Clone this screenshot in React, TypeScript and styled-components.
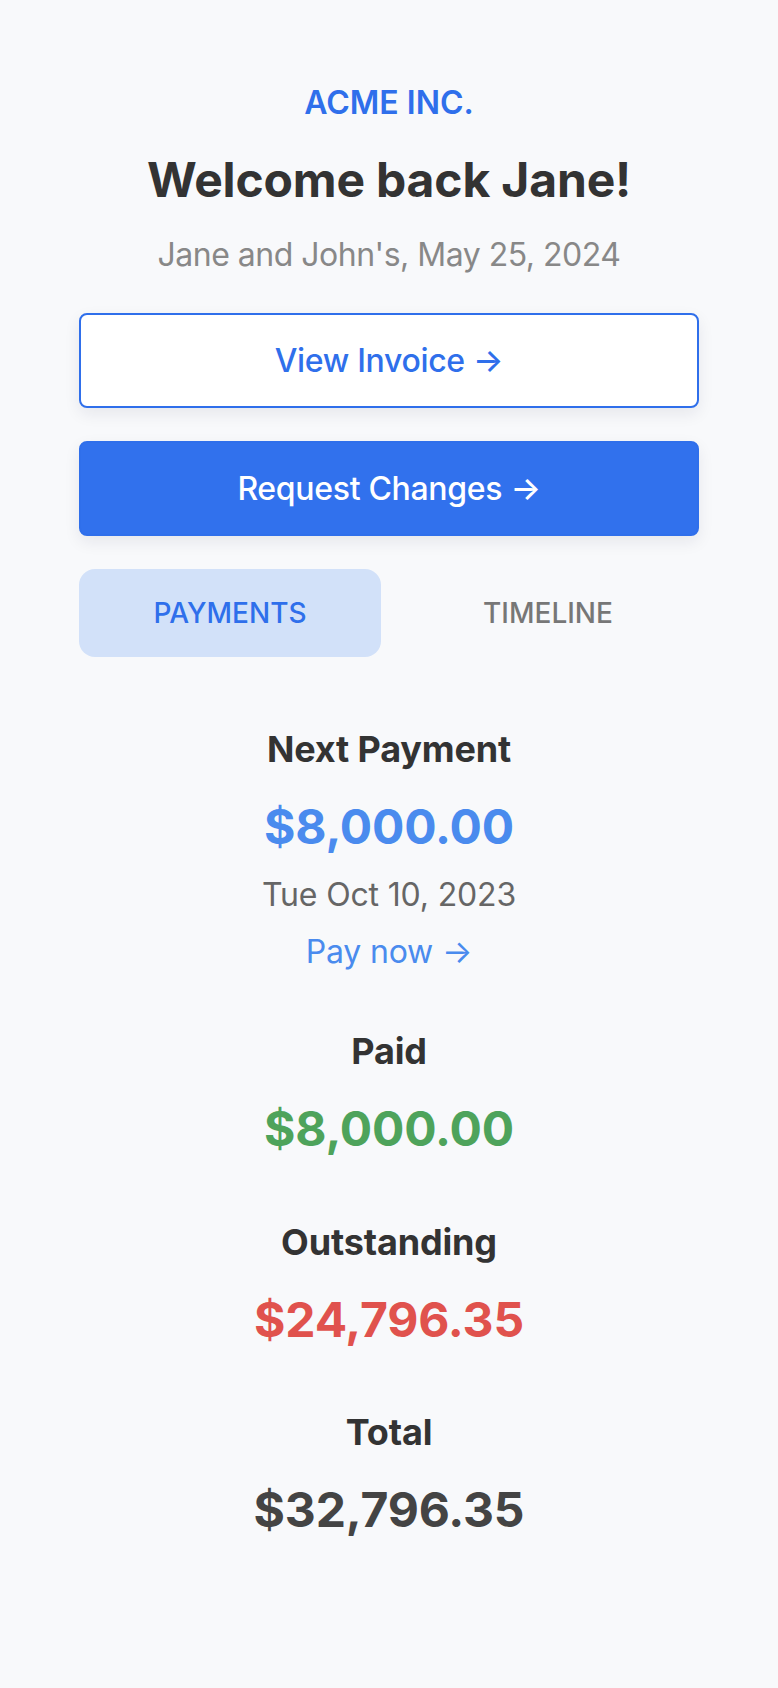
import React from "react";
import styled, { createGlobalStyle } from "styled-components";

const GlobalStyle = createGlobalStyle`
  html, body {
    margin: 0;
    padding: 0;
    background: #f8f9fb;
  }
  body {
    font-family: Inter, "Noto Sans", sans-serif;
    -webkit-font-smoothing: antialiased;
    letter-spacing: -0.01em;
  }
  * { box-sizing: border-box; }
`;

const Page = styled.main`
  min-height: 1688px;
  background: #f8f9fb;
  padding: 79px 0 80px;
`;

const Column = styled.div`
  width: 620px;
  margin: 0 auto;
  display: flex;
  flex-direction: column;
  align-items: stretch;
  text-align: center;
`;

const Brand = styled.div`
  font-size: 32px;
  line-height: 48px;
  font-weight: 600;
  letter-spacing: 0;
  color: #2f6feb;
`;

const Title = styled.h1`
  margin: 23px 0 0;
  font-size: 48px;
  line-height: 60px;
  font-weight: 700;
  color: #333333;
`;

const Subtitle = styled.p`
  margin: 21px 0 0;
  font-size: 32px;
  line-height: 48px;
  font-weight: 400;
  letter-spacing: -0.5px;
  color: #888888;
`;

const ActionButton = styled.button<{ $primary?: boolean }>`
  margin-top: ${(p) => (p.$primary ? "33px" : "34px")};
  height: 95px;
  width: 100%;
  border-radius: 8px;
  border: 2px solid #2f6feb;
  background: ${(p) => (p.$primary ? "#3171ed" : "#ffffff")};
  color: ${(p) => (p.$primary ? "#ffffff" : "#2f6feb")};
  font-family: Inter, sans-serif;
  font-size: 32px;
  font-weight: 500;
  letter-spacing: -0.01em;
  box-shadow: 0 6px 16px rgba(20, 30, 60, 0.08);
  cursor: pointer;
`;

const Tabs = styled.div`
  margin-top: 33px;
  display: grid;
  grid-template-columns: 1fr 1fr;
  gap: 16px;
`;

const Tab = styled.button<{ $active?: boolean }>`
  height: 88px;
  border: none;
  border-radius: 16px;
  background: ${(p) => (p.$active ? "#d2e1f9" : "transparent")};
  color: ${(p) => (p.$active ? "#2f6feb" : "#777777")};
  font-family: Inter, sans-serif;
  font-size: 28px;
  font-weight: 500;
  cursor: pointer;
`;

const Summary = styled.section`
  margin-top: 68px;
  display: flex;
  flex-direction: column;
  align-items: center;
`;

const Block = styled.div<{ $gap: number }>`
  display: flex;
  flex-direction: column;
  align-items: center;
  margin-top: ${(p) => p.$gap}px;
`;

const Label = styled.h2`
  margin: 0;
  font-size: 36px;
  line-height: 48px;
  font-weight: 700;
  color: #333333;
`;

const Amount = styled.div<{ $color: string }>`
  margin-top: 22px;
  font-size: 48px;
  line-height: 64px;
  font-weight: 700;
  color: ${(p) => p.$color};
`;

const DateText = styled.div`
  margin-top: 12px;
  font-size: 32px;
  line-height: 48px;
  color: #666666;
`;

const PayLink = styled.a`
  margin-top: 9px;
  font-size: 32px;
  line-height: 48px;
  color: #4a8bee;
  text-decoration: none;
`;

export default function App() {
  return (
    <>
      <GlobalStyle />
      <Page>
        <Column>
          <Brand>ACME INC.</Brand>
          <Title>Welcome back Jane!</Title>
          <Subtitle>Jane and John's, May 25, 2024</Subtitle>
          <ActionButton>View Invoice →</ActionButton>
          <ActionButton $primary>Request Changes →</ActionButton>
          <Tabs>
            <Tab $active>PAYMENTS</Tab>
            <Tab>TIMELINE</Tab>
          </Tabs>
          <Summary>
            <Block $gap={0}>
              <Label>Next Payment</Label>
              <Amount $color="#4a8bee">$8,000.00</Amount>
              <DateText>Tue Oct 10, 2023</DateText>
              <PayLink href="#">Pay now →</PayLink>
            </Block>
            <Block $gap={51}>
              <Label>Paid</Label>
              <Amount $color="#4ea35b">$8,000.00</Amount>
            </Block>
            <Block $gap={57}>
              <Label>Outstanding</Label>
              <Amount $color="#e0524d">$24,796.35</Amount>
            </Block>
            <Block $gap={56}>
              <Label>Total</Label>
              <Amount $color="#444444">$32,796.35</Amount>
            </Block>
          </Summary>
        </Column>
      </Page>
    </>
  );
}
